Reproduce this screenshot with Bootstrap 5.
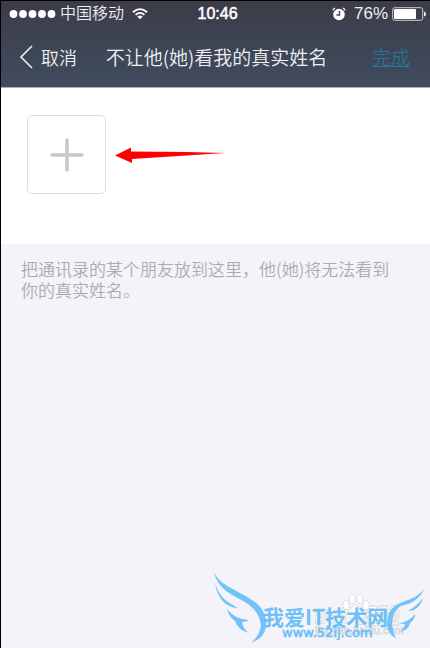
<!DOCTYPE html>
<html lang="zh-CN">
<head>
<meta charset="utf-8">
<meta name="viewport" content="width=device-width, initial-scale=1">
<title>不让他(她)看我的真实姓名</title>
<link href="https://cdn.jsdelivr.net/npm/bootstrap@5.3.0/dist/css/bootstrap.min.css" rel="stylesheet">
<style>
body { font-family: "Liberation Sans", "Noto Sans CJK SC", sans-serif; background: #f4f3f9; border-top: 1px solid #000; border-left: 1px solid #000; }
.top-area { background: linear-gradient(#3c3c48, #404c5f); color: #edeff2; border-bottom: 1px solid #a9afb9; }
.status-bar { height: 26px; font-size: 16px; line-height: 26px; padding: 0 4px 0 8px; }
.status-side { flex: 1 1 0; }
.carrier { font-weight: 350; }
.power { font-size: 17px; }
.clock { color: #fff; -webkit-text-stroke: 0.5px #fff; }
.title-bar { height: 60px; padding: 0 20px 0 18px; font-family: "Noto Sans CJK SC", sans-serif; font-weight: 350; font-size: 19px; line-height: 24px; }
.title-bar h1 { font-size: 19px; line-height: 24px; font-weight: 350; }
.back-btn { color: inherit; font-weight: inherit; font-size: 18px; line-height: 24px; }
.done-link, .done-link:hover { color: #247ba2; font-weight: 300; }
.picker { background: #fff; padding: 27px 26px 50px; }
.add-btn { width: 79px; height: 79px; border: 1px solid #dedede; border-radius: 5px; background: #fff; }
.hint { padding: 14px 30px 14px 20px; color: #acacae; font-family: "Noto Sans CJK SC", sans-serif; font-weight: 350; font-size: 17px; line-height: 21px; }
.site-name { font: 700 21px "Noto Sans CJK SC", sans-serif; }
.site-url { font: 13px "DejaVu Sans", sans-serif; stroke: #68bff8; stroke-width: .6px; }
.faint-name { font: 700 21px "Liberation Sans", "Noto Sans CJK SC", sans-serif; }
.faint-url { font: 11px "Liberation Sans", sans-serif; }
</style>
<script src="https://cdn.jsdelivr.net/npm/bootstrap@5.3.0/dist/js/bootstrap.bundle.min.js"></script>
</head>
<body class="min-vh-100 d-flex flex-column">
<header class="top-area">
  <div class="status-bar d-flex align-items-center">
    <div class="status-side d-flex align-items-center gap-1">
      <svg width="47" height="10" viewBox="0 0 47 10" fill="#fff" aria-hidden="true"><circle cx="4.500" cy="5" r="3.900"/><circle cx="14" cy="5" r="3.900"/><circle cx="23.500" cy="5" r="3.900"/><circle cx="33" cy="5" r="3.900"/><circle cx="42.500" cy="5" r="3.900"/></svg>
      <span class="carrier">中国移动</span>
      <svg class="ms-1" width="16" height="14" viewBox="0 0 18 14" fill="none" stroke="#fff" stroke-width="2" aria-hidden="true"><path d="M1 5Q9-2 17 5M4 8Q9 3.500 14 8"/><path d="M9 13L6 10Q9 7.500 12 10Z" fill="#fff" stroke="none"/></svg>
    </div>
    <div class="clock">10:46</div>
    <div class="status-side d-flex align-items-center justify-content-end gap-1">
      <svg class="me-1" width="14" height="14" viewBox="0 0 14 14" aria-hidden="true"><circle cx="7" cy="7.500" r="5.800" fill="#fff"/><path d="M7.500 4V8H4.500" fill="none" stroke="#414653" stroke-width="1.400"/><path d="M1 3.500Q1.200 1.500 3.200 1M13 3.500Q12.800 1.500 10.800 1" fill="none" stroke="#fff" stroke-width="1.200"/></svg>
      <span class="power">76%</span>
      <svg width="34" height="14" viewBox="0 0 34 14" aria-hidden="true"><rect x=".7" y=".7" width="30" height="12.600" rx="2" fill="none" stroke="#c9cbd0"/><rect x="2" y="2" width="22" height="10" rx="1" fill="#fff"/><path d="M32 4.500Q34 5 34 7T32 9.500Z" fill="#fff"/></svg>
    </div>
  </div>
  <nav class="title-bar d-flex align-items-center justify-content-between">
    <button type="button" class="back-btn btn p-0 border-0 d-flex align-items-center gap-2"><svg width="14" height="24" viewBox="0 0 14 24" fill="none" stroke="#edeff2" stroke-width="1.600" aria-hidden="true"><path d="M13 1L2 12L13 23"/></svg>取消</button>
    <h1 class="m-0 text-nowrap pe-3">不让他(她)看我的真实姓名</h1>
    <a class="done-link" href="#">完成</a>
  </nav>
</header>
<main class="flex-grow-1 d-flex flex-column">
  <section class="picker d-flex align-items-center gap-2">
    <button type="button" class="add-btn d-flex align-items-center justify-content-center p-0" aria-label="添加"><svg width="34" height="34" viewBox="0 0 34 34" stroke="#c8c7cc" stroke-width="3.500" stroke-linecap="round"><path d="M17 2V32M2 17H32"/></svg></button>
    <svg width="112" height="17" viewBox="0 0 112 17" aria-hidden="true"><path d="M1 9.500L17 1.500V5.500L72 6L111 7L18 13V17Z" fill="#f00"/></svg>
  </section>
  <p class="hint m-0">把通讯录的某个朋友放到这里，他(她)将无法看到你的真实姓名。</p>
  <footer class="mt-auto d-flex justify-content-end">
    <svg width="220" height="88" viewBox="210 560 220 88" role="img" aria-label="我爱IT技术网 www.52ij.com">
      <g fill="#fff" stroke="#d8d8dd" stroke-width=".8">
        <text class="faint-name" x="314" y="623">Bai</text><text class="faint-name" x="358" y="623">经验</text>
        <text class="faint-url" x="315" y="634">jingyan.baidu.com</text>
        <ellipse cx="346" cy="605" rx="3.300" ry="4.500"/><ellipse cx="352.500" cy="599" rx="3" ry="4.500"/><ellipse cx="360" cy="599" rx="3" ry="4.500"/><ellipse cx="366" cy="605" rx="3.300" ry="4.500"/><path d="M356 605Q361 607 365 614Q365 620 356 618Q347 620 347 614Q350 607 356 605Z"/>
      </g>
      <g fill="#72c3f9">
        <path d="M214 572C220 586 236 589 252 600C265 608 271 624 262 636Q258 641 252 642Q260 635 261 625C259 608 245 602 234 596Q217 587 214 572Z"/>
        <path d="M215 583C220 599 228 602 238 608Q219 607 215 583Z"/>
        <path d="M227 609Q234 619 249 620Q246 622 242 622Q243 629 249 633Q238 630 235 621Q229 617 227 609Z"/>
        <path d="M424 589C413 603 398 599 390 611C384 624 388 635 396 638C390 626 391 612 401 606Q419 602 424 589Z"/>
        <path d="M423 598Q417 606 408 611Q414 611 418 607Q422 603 423 598Z"/>
        <path d="M415 614Q411 620 399 624Q402 624 405 624Q404 629 399 632Q409 630 410 623Q415 620 415 614Z"/>
        <g fill="#5bbaf7" fill-opacity=".9"><text class="site-name" x="263" y="625">我爱IT技术网</text><text class="site-url" x="282" y="637">www.52ij.com</text></g>
      </g>
    </svg>
  </footer>
</main>
</body>
</html>
